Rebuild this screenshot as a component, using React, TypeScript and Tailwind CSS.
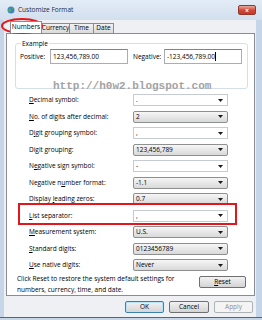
import React from 'react';

type Row = { label: React.ReactNode; value: string; editable: boolean };

const u = (ch: string) => <span className="underline">{ch}</span>;

const rows: Row[] = [
  { label: <>{u('D')}ecimal symbol:</>, value: '.', editable: true },
  { label: <>{u('N')}o. of digits after decimal:</>, value: '2', editable: false },
  { label: <>D{u('i')}git grouping symbol:</>, value: ',', editable: true },
  { label: <>Di{u('g')}it grouping:</>, value: '123,456,789', editable: false },
  { label: <>N{u('e')}gative sign symbol:</>, value: '-', editable: true },
  { label: <>Negative n{u('u')}mber format:</>, value: '-1.1', editable: false },
  { label: <>Display {u('l')}eading zeros:</>, value: '0.7', editable: false },
  { label: <>{u('L')}ist separator:</>, value: ',', editable: true },
  { label: <>{u('M')}easurement system:</>, value: 'U.S.', editable: false },
  { label: <>{u('S')}tandard digits:</>, value: '0123456789', editable: false },
  { label: <>{u('U')}se native digits:</>, value: 'Never', editable: false },
];

const Arrow = () => (
  <svg width="5" height="3" viewBox="0 0 5 3" className="ml-auto mr-[4px] shrink-0">
    <path d="M0 0h5L2.5 3z" fill="#1a1a1a" />
  </svg>
);

const Combo = ({ value, editable }: { value: string; editable: boolean }) => (
  <div
    className={`flex items-center w-[95px] h-[12px] pl-[2px] text-[6.5px] leading-none ${
      editable
        ? 'bg-white border border-[#c5cad3]'
        : 'bg-gradient-to-b from-[#f6f6f6] to-[#d9d9d9] border border-[#8e8f8f] rounded-[2px]'
    }`}
  >
    <span>{value}</span>
    <Arrow />
  </div>
);

const Tab = ({ label, w, active }: { label: string; w: string; active?: boolean }) => (
  <div
    className={`${w} flex items-center justify-center border border-b-0 border-[#898c95] text-[6.5px] leading-none ${
      active ? 'h-[12px] bg-white relative z-10 -mb-px' : 'h-[10px] mt-[2px] bg-gradient-to-b from-[#f2f2f2] to-[#dadada] -ml-px'
    }`}
  >
    {label}
  </div>
);

const Btn = ({ children, w, def, disabled }: { children: React.ReactNode; w: string; def?: boolean; disabled?: boolean }) => (
  <div
    className={`${w} h-[12px] flex items-center justify-center rounded-[2px] text-[6.5px] leading-none border ${
      def ? 'border-[#3c7fb1] shadow-[inset_0_0_0_1px_#b6e3f9]' : disabled ? 'border-[#adb2b5]' : 'border-[#707070]'
    } ${disabled ? 'bg-[#f4f4f4] text-[#8f8f8f]' : 'bg-gradient-to-b from-[#f2f2f2] to-[#d4d4d4] text-black'}`}
  >
    {children}
  </div>
);

export default function App() {
  return (
    <div
      className="relative w-[262px] h-[320px] overflow-hidden bg-[#bdd0e4] flex flex-col text-black"
      style={{ fontFamily: '"Open Sans", "Liberation Sans", sans-serif' }}
    >
      {/* title bar */}
      <div className="h-[20px] flex items-center pl-[7px] pr-[6px] bg-gradient-to-b from-[#e3ecf6] to-[#d2dfee]">
        <svg width="8" height="8" viewBox="0 0 8 8" className="shrink-0">
          <circle cx="4" cy="4" r="3.5" fill="#3d86c6" />
          <path d="M1.5 3.2c1-.8 2-.3 2.6.3.5.5.2 1.5-.6 1.6-.7.1-.8 1-.3 1.8C2 6.6 1.2 5.2 1.5 3.2z" fill="#5bb04a" />
          <path d="M4.6 1.2c.9.1 1.8.8 2.2 1.6-.6.2-1.3 0-1.7-.4-.3-.4-.6-.8-.5-1.2z" fill="#5bb04a" />
        </svg>
        <span className="ml-[3px] text-[6.5px] leading-none text-[#1e2a38]">Customize Format</span>
        <div className="ml-auto w-[18px] h-[10px] rounded-[2px] border border-[#8e3a2e] bg-gradient-to-b from-[#e9a99c] via-[#d2493a] to-[#c4392b] flex items-center justify-center">
          <span className="text-white text-[7px] font-bold leading-none">×</span>
        </div>
      </div>

      <div className="flex-1 flex">
        <div className="w-[4px] bg-[#c6d6e8]" />
        <div className="flex-1 bg-[#eef0f3] flex flex-col pl-[2px] pr-[1px] pt-[1px]">
          {/* tabs */}
          <div className="flex pl-[4px] h-[12px]">
            <Tab label="Numbers" w="w-[32px]" active />
            <Tab label="Currency" w="w-[29px]" />
            <Tab label="Time" w="w-[25px]" />
            <Tab label="Date" w="w-[21px]" />
          </div>

          {/* panel */}
          <div className="h-[263px] bg-white border border-[#898c95] flex flex-col pl-[8px] pr-[6px] pt-[5px]">
            <fieldset className="h-[50px] border border-[#d5dfe5] rounded-[3px] px-[4px]">
              <legend className="px-[1px] text-[6.5px] leading-[9px] ml-[1px]">Example</legend>
              <div className="flex items-center mt-[1px] text-[6.5px]">
                <span className="w-[30px]">Positive:</span>
                <div className="w-[78px] h-[15px] border border-[#abadb3] border-t-[#7f838c] flex items-center pl-[2px]">
                  123,456,789.00
                </div>
                <span className="ml-[5px] w-[31px]">Negative:</span>
                <div className="w-[78px] h-[15px] border border-[#abadb3] border-t-[#7f838c] flex items-center pl-[2px]">
                  -123,456,789.00<span className="w-px h-[9px] bg-black" />
                </div>
              </div>
            </fieldset>

            <div className="mt-[3px] flex flex-col">
              {rows.map((r, i) => (
                <div key={i} className="h-[16.5px] flex items-center pl-[14px]">
                  <span className="w-[104px] text-[6.5px] leading-none">{r.label}</span>
                  <Combo value={r.value} editable={r.editable} />
                </div>
              ))}
            </div>

            <div className="flex items-start text-[6.5px] leading-[11px] mt-[-1px]">
              <div className="pl-[2px]">
                Click Reset to restore the system default settings for
                <br />
                numbers, currency, time, and date.
              </div>
            </div>
          </div>

          {/* dialog buttons */}
          <div className="flex justify-end gap-[5px] mt-[5px] pr-[2px]">
            <Btn w="w-[39px]" def>OK</Btn>
            <Btn w="w-[40px]">Cancel</Btn>
            <Btn w="w-[39px]" disabled>Apply</Btn>
          </div>
        </div>
        <div className="w-[6px] bg-[#c6d6e8]" />
      </div>
      <div className="h-[3px] bg-[#c6d6e8] border-t border-[#4b6783]" />

      {/* Reset button inside panel (overlay position matches text line) */}
      <div className="absolute left-[199px] top-[276px]">
        <Btn w="w-[47px]">{u('R')}eset</Btn>
      </div>

      {/* watermark */}
      <div
        className="absolute left-[53px] top-[79px] text-[11px] leading-[14px] text-[#a3a3a3] font-bold pointer-events-none"
        style={{ fontFamily: '"Liberation Mono", monospace' }}
      >
        http://h0w2.blogspot.com
      </div>

      {/* red annotations */}
      <div className="absolute left-[1px] top-[18px] w-[42px] h-[16px] rounded-[50%] border-2 border-[#e3161c] pointer-events-none" />
      <div className="absolute left-[18px] top-[203px] w-[219px] h-[22px] border-2 border-[#e3161c] pointer-events-none" />
    </div>
  );
}
